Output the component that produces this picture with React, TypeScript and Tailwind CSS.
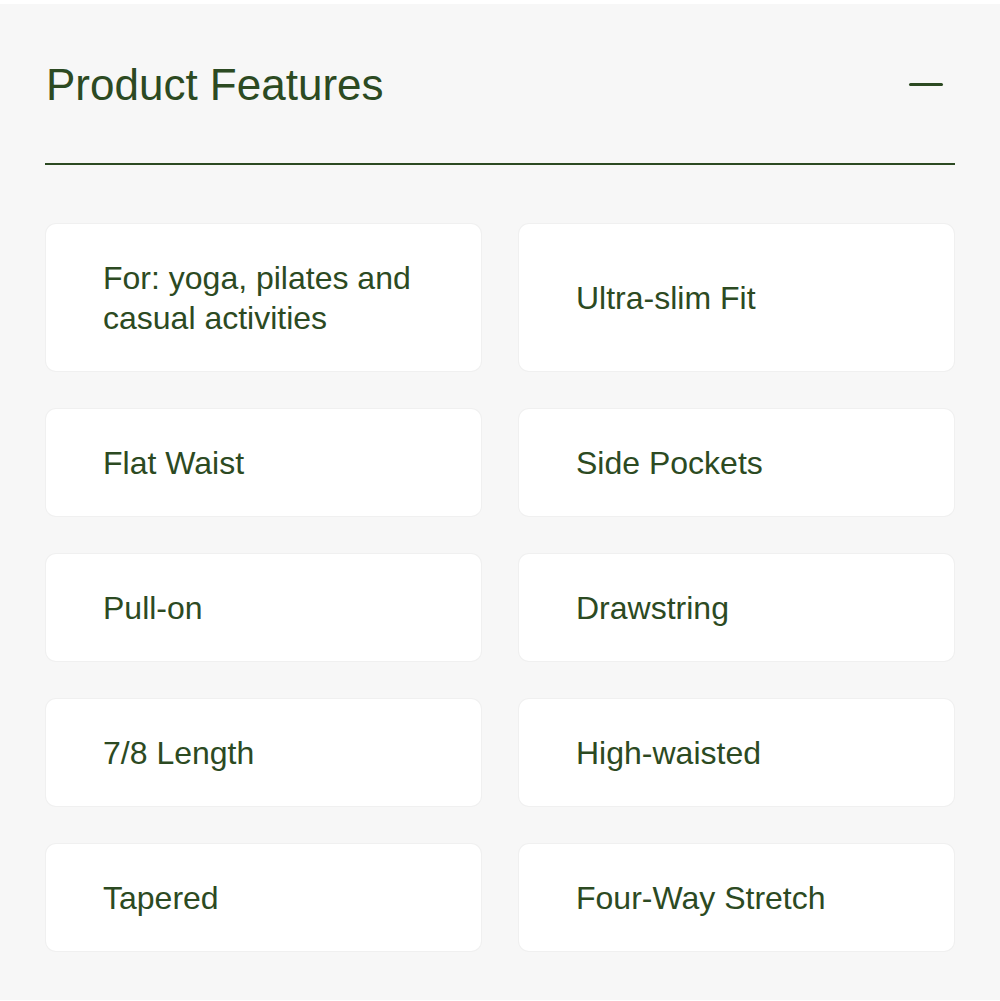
const features = [
  "For: yoga, pilates and casual activities",
  "Ultra-slim Fit",
  "Flat Waist",
  "Side Pockets",
  "Pull-on",
  "Drawstring",
  "7/8 Length",
  "High-waisted",
  "Tapered",
  "Four-Way Stretch",
];

export default function App() {
  return (
    <main
      className="min-h-screen bg-white pt-[4px] text-[#2c4a22]"
      style={{ fontFamily: '"Liberation Sans", Arial, sans-serif' }}
    >
      <section className="h-[996px] bg-[#f7f7f7] px-[45px] pt-[54px]">
        <div className="flex items-center justify-between pl-[1px]">
          <h2 className="text-[44px] leading-[53px] font-normal">Product Features</h2>
          <button aria-label="Collapse" className="mr-[12px] flex h-[34px] w-[34px] items-center">
            <span className="block h-[3px] w-[34px] rounded-full bg-[#2c4a22]" />
          </button>
        </div>

        <div className="mt-[52px] h-[2px] bg-[#2c4a22]" />

        <div className="mx-[1px] mt-[59px] grid grid-cols-2 gap-[38px]">
          {features.map((f) => (
            <div
              key={f}
              className="flex items-center rounded-[10px] bg-white py-[33.5px] pr-6 pl-[57px] ring-1 ring-[#f0f0f0]"
            >
              <p className="text-[32px] leading-[40px]">{f}</p>
            </div>
          ))}
        </div>
      </section>
    </main>
  );
}
